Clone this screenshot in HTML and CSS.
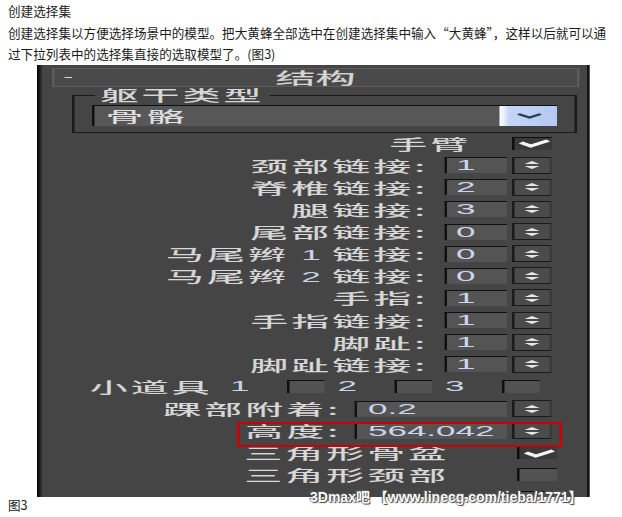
FILE: index.html
```html
<!DOCTYPE html>
<html lang="zh-CN">
<head>
	<meta charset="utf-8">
	<title>创建选择集</title>
	<link rel="stylesheet" href="styles.css">
</head>
<body>
	<div class="intro">
		<p>创建选择集</p>
		<p>创建选择集以方便选择场景中的模型。把大黄蜂全部选中在创建选择集中输入“大黄蜂”，这样以后就可以通<br>过下拉列表中的选择集直接的选取模型了。(图3)</p>
	</div>

	<div class="shot">
		<div class="panel">
			<div class="head"><span class="minus"></span><span class="title">结构</span><span></span></div>

			<fieldset class="group">
				<legend>躯干类型</legend>
				<div class="combo">
					<span class="combo-text">骨骼</span>
					<span class="combo-btn"><svg width="10" height="6" viewBox="0 0 10 6"><polyline points="0.5,1 5,4.5 9.5,1" fill="none" stroke="#2b3b5a" stroke-width="1.8"/></svg></span>
				</div>
			</fieldset>

			<div class="rows">
				<div class="row row-check"><span class="lbl">手臂</span><span class="check on"><svg width="14" height="11" viewBox="0 0 14 11"><polyline points="1.5,4.5 5.5,8 12.5,2.5" fill="none" stroke="#f4f4f4" stroke-width="2.6"/></svg></span></div>
				<div class="row"><span class="lbl">颈部链接:</span><span class="field">1</span><span class="spin"></span></div>
				<div class="row"><span class="lbl">脊椎链接:</span><span class="field">2</span><span class="spin"></span></div>
				<div class="row"><span class="lbl">腿链接:</span><span class="field">3</span><span class="spin"></span></div>
				<div class="row"><span class="lbl">尾部链接:</span><span class="field">0</span><span class="spin"></span></div>
				<div class="row"><span class="lbl">马尾辫 <span class="dig">1</span> 链接:</span><span class="field">0</span><span class="spin"></span></div>
				<div class="row"><span class="lbl">马尾辫 <span class="dig">2</span> 链接:</span><span class="field">0</span><span class="spin"></span></div>
				<div class="row"><span class="lbl">手指:</span><span class="field">1</span><span class="spin"></span></div>
				<div class="row"><span class="lbl">手指链接:</span><span class="field">1</span><span class="spin"></span></div>
				<div class="row"><span class="lbl">脚趾:</span><span class="field">1</span><span class="spin"></span></div>
				<div class="row"><span class="lbl">脚趾链接:</span><span class="field">1</span><span class="spin"></span></div>
				<div class="row row-props">
					<span class="props-lbl">小道具</span>
					<span class="opt"><span class="num">1</span><span class="check"></span></span>
					<span class="opt"><span class="num">2</span><span class="check"></span></span>
					<span class="opt"><span class="num">3</span><span class="check"></span></span>
				</div>
				<div class="row row-wide"><span class="lbl">踝部附着:</span><span class="field">0.2</span><span class="spin"></span></div>
				<div class="row row-wide row-height"><span class="lbl">高度:</span><span class="field">564.042</span><span class="spin"></span><span class="redbox"></span></div>
				<div class="row row-check row-tri"><span class="lbl">三角形骨盆</span><span class="check on"><svg width="14" height="11" viewBox="0 0 14 11"><polyline points="1.5,4.5 5.5,8 12.5,2.5" fill="none" stroke="#f4f4f4" stroke-width="2.6"/></svg></span></div>
				<div class="row row-check row-tri"><span class="lbl">三角形颈部</span><span class="check"></span></div>
				<div class="row row-check row-tri"><span class="check"></span></div>
			</div>
		</div>
		<div class="mark">3Dmax吧 【www.linecg.com/tieba/1771】</div>
	</div>

	<p class="caption">图3</p>
</body>
</html>
```

FILE: styles.css
```css
body{
	margin:0;
	background:#fff;
	color:#1b1b1b;
	font-family:"Noto Sans CJK SC", sans-serif;
}

.intro{
	padding:0 8px;
	font-size:12.6px;
	line-height:21.5px;
	white-space:nowrap;
}

.intro p{
	margin:0;
}

.shot{
	position:relative;
	height:432px;
	margin-top:0.5px;
}

/* the panel is drawn at its real 3ds Max width and stretched like the screenshot */
.panel{
	width:221.2px;
	height:432px;
	margin-left:37px;
	padding-top:3px;
	box-sizing:border-box;
	transform:scaleX(2.5);
	transform-origin:0 0;
	overflow:hidden;
	background:#454545;
	box-shadow:inset 1px 0 0 #0c0c0c, inset 2px 0 0 #2a2a2a, inset -1px 0 0 #141414;
	color:#d8d8d8;
	font-size:15px;
	letter-spacing:1.4px;
	-webkit-text-stroke:0.2px #d8d8d8;
}

.head{
	margin-left:5.6px;
	width:211.6px;
	height:19px;
	box-sizing:border-box;
	border:1px solid #5c5c5c;
	background:#4a4a4a;
	display:grid;
	grid-template-columns:1fr auto 1fr;
	align-items:center;
	line-height:17px;
}

.minus{
	width:3px;
	height:1.5px;
	margin-left:4.8px;
	background:#dadada;
}

.title{
	font-size:16px;
	letter-spacing:0;
	color:#d4d4d4;
}

.group{
	margin:0 0 0 13.6px;
	width:202.4px;
	min-width:0;
	box-sizing:border-box;
	padding:2px 0 6px 0;
	border:1px solid #1a1a1a;
}

.group legend{
	margin-left:8.9px;
	padding:0 2px;
	line-height:16px;
}

.combo{
	margin-left:7.4px;
	width:186.4px;
	height:21px;
	box-sizing:border-box;
	display:flex;
	background:#575757;
	border-top:1px solid #101010;
	border-left:1px solid #101010;
	line-height:20px;
}

.combo-text{
	padding-left:4.5px;
	color:#e2e2e2;
}

.combo-btn{
	margin-left:auto;
	width:23.2px;
	display:flex;
	align-items:center;
	justify-content:center;
	background:linear-gradient(90deg, #fbfcff 0, #f0f4ff 6%, #c5d5f6 16%, #b4c9f1 100%);
}

.rows{
	margin-top:-1px;
}

.row{
	height:22.13px;
	display:flex;
	align-items:center;
	justify-content:flex-end;
	padding-right:14.8px;
	white-space:nowrap;
}

.lbl{
	margin-right:6.6px;
}

.dig,
.num{
	font-family:"Liberation Sans", sans-serif;
	font-size:14px;
	letter-spacing:0;
	color:#c8d3ea;
	-webkit-text-stroke:0;
}

.field{
	width:25.2px;
	height:16px;
	box-sizing:border-box;
	margin-right:2px;
	padding-left:3.4px;
	background:#545454;
	border-top:1px solid #111;
	border-left:1px solid #111;
	font-family:"Liberation Sans", sans-serif;
	font-size:14px;
	line-height:15px;
	letter-spacing:0;
	color:#cbd5ec;
	-webkit-text-stroke:0;
}

.spin{
	width:16px;
	height:17px;
	box-sizing:border-box;
	background:#4b4b4b;
	border:1px solid #1a1a1a;
	border-right-color:#3a3a3a;
	display:flex;
	flex-direction:column;
	align-items:center;
	justify-content:center;
	gap:2px;
}

.spin::before,
.spin::after{
	content:"";
	width:0;
	height:0;
	border-left:3px solid transparent;
	border-right:3px solid transparent;
}

.spin::before{
	border-bottom:3px solid #e6e6e6;
}

.spin::after{
	border-top:3px solid #e6e6e6;
}

.check{
	width:16px;
	height:13px;
	box-sizing:border-box;
	background:#525252;
	border-top:1px solid #0e0e0e;
	border-left:1px solid #0e0e0e;
	display:flex;
	align-items:center;
	justify-content:center;
}

.check.on{
	background:#3a3a3a;
}

.row-check .lbl{
	margin-right:16.6px;
}

.row-tri{
	padding-right:13.2px;
}

.row-tri .lbl{
	margin-right:27px;
}

.row-props{
	justify-content:flex-start;
	padding:0 0 0 21.2px;
}

.props-lbl{
	width:56px;
}

.opt{
	width:43px;
	display:flex;
	align-items:center;
}

.opt .check{
	width:15px;
	margin-left:auto;
	margin-right:5px;
}

.row-wide .lbl{
	margin-right:5px;
}

.row-wide .field{
	width:61.6px;
	padding-left:4.6px;
}

.row-height{
	position:relative;
}

.redbox{
	position:absolute;
	left:79.6px;
	top:2.3px;
	width:130.8px;
	height:25px;
	box-sizing:border-box;
	border:2px solid #cc0000;
	border-left-width:1px;
	border-right-width:1px;
}

.mark{
	position:absolute;
	left:310px;
	top:424px;
	font-family:"Liberation Sans", "Noto Sans CJK SC", sans-serif;
	font-size:14px;
	font-weight:bold;
	line-height:16px;
	color:#fff;
	white-space:nowrap;
	text-shadow:0 0 1px #3a3a3a, 1px 1px 1px #444, -1px -1px 1px #666;
}

.caption{
	margin:0;
	padding-left:8px;
	font-size:12.6px;
	line-height:16px;
}
```
